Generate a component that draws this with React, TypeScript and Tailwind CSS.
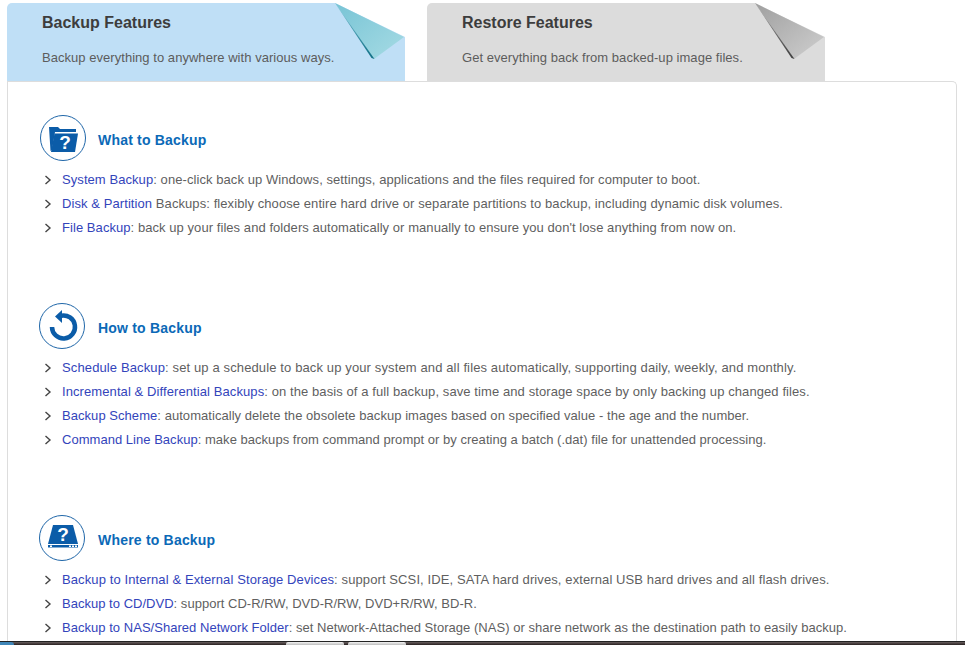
const sections = [
  {
    title: 'What to Backup',
    icon: 'folder',
    height: 'h-[188px]',
    row: 'gap-[12px]',
    items: [
      ['System Backup', ': one-click back up Windows, settings, applications and the files required for computer to boot.', 'tracking-[0.07px]'],
      ['Disk & Partition', ' Backups: flexibly choose entire hard drive or separate partitions to backup, including dynamic disk volumes.', 'tracking-[0.08px]'],
      ['File Backup', ": back up your files and folders automatically or manually to ensure you don't lose anything from now on.", 'tracking-[0.06px]'],
    ],
  },
  {
    title: 'How to Backup',
    icon: 'undo',
    height: 'h-[212px]',
    row: '-ml-px gap-[13px]',
    items: [
      ['Schedule Backup', ': set up a schedule to back up your system and all files automatically, supporting daily, weekly, and monthly.', 'tracking-[0.125px]'],
      ['Incremental & Differential Backups', ': on the basis of a full backup, save time and storage space by only backing up changed files.', 'tracking-[0.09px]'],
      ['Backup Scheme', ': automatically delete the obsolete backup images based on specified value - the age and the number.', 'tracking-[0.05px]'],
      ['Command Line Backup', ': make backups from command prompt or by creating a batch (.dat) file for unattended processing.', 'tracking-[0.03px]'],
    ],
  },
  {
    title: 'Where to Backup',
    icon: 'disk',
    height: 'h-auto',
    row: '-ml-px gap-[13px]',
    items: [
      ['Backup to Internal & External Storage Devices', ': support SCSI, IDE, SATA hard drives, external USB hard drives and all flash drives.', 'tracking-[0.105px]'],
      ['Backup to CD/DVD', ': support CD-R/RW, DVD-R/RW, DVD+R/RW, BD-R.', 'tracking-[0.02px]'],
      ['Backup to NAS/Shared Network Folder', ': set Network-Attached Storage (NAS) or share network as the destination path to easily backup.', 'tracking-[0.035px]'],
    ],
  },
];

function SectionIcon({ name }: { name: string }) {
  return (
    <svg width="46" height="46" viewBox="0 0 46 46" className="shrink-0">
      <circle cx="23" cy="23" r="22.5" fill="#fff" stroke="#1f66a8" strokeWidth="1" />
      {name === 'folder' && (
        <>
          <path d="M9 12h9l2 2h16v3H15l-3 18-1.5 1z" fill="#0b5ca8" />
          <path d="M14.5 18.5H38l-3 18.5H11z" fill="#0b5ca8" />
          <text x="25" y="34" textAnchor="middle" fontSize="19" fontWeight="700" fill="#fff" fontFamily="Liberation Sans">?</text>
        </>
      )}
      {name === 'undo' && (
        <>
          <path d="M22 12.7A11.5 11.5 0 1 1 13 24" fill="none" stroke="#0b5ca8" strokeWidth="4.5" />
          <path d="M23 7v13l-7-6.5z" fill="#0b5ca8" />
        </>
      )}
      {name === 'disk' && (
        <>
          <path d="M14 10h20l5 19H9z" fill="#0b5ca8" />
          <path d="M9 30h30v2.5H9z" fill="#0b5ca8" />
          <rect x="11" y="30.5" width="2" height="1.5" fill="#fff" />
          <rect x="30" y="30.5" width="2" height="1.5" fill="#fff" />
          <rect x="33" y="30.5" width="2" height="1.5" fill="#fff" />
          <rect x="36" y="30.5" width="2" height="1.5" fill="#fff" />
          <text x="24" y="26" textAnchor="middle" fontSize="19" fontWeight="700" fill="#fff" fontFamily="Liberation Sans">?</text>
        </>
      )}
    </svg>
  );
}

function Fold({ id, light, mid, dark }: { id: string; light: string; mid: string; dark: string }) {
  return (
    <svg width="70" height="57" viewBox="0 0 70 57" className="absolute right-0 top-0">
      <defs>
        <linearGradient id={id} x1="0" y1="0" x2="1" y2="1">
          <stop offset="0" stopColor={mid} />
          <stop offset="1" stopColor={light} />
        </linearGradient>
        <linearGradient id={`${id}Edge`} x1="0" y1="0" x2="0" y2="1">
          <stop offset="0" stopColor={mid} />
          <stop offset="1" stopColor={dark} />
        </linearGradient>
      </defs>
      <path d="M0 0h70v34z" fill="#fff" />
      <path d="M0 0L69 34L39 56z" fill={`url(#${id})`} />
      <path d="M0 0L39.5 56L36.5 55z" fill={`url(#${id}Edge)`} />
    </svg>
  );
}

export default function App() {
  return (
    <div className="flex h-[645px] w-[965px] flex-col overflow-hidden bg-white font-['Liberation_Sans',sans-serif]">
      <div className="flex h-[641px] flex-col overflow-hidden pt-[3px] pr-[8px] pl-[7px]">
        <div className="flex h-[78px] shrink-0 gap-[22px]">
          <div className="relative h-[78px] w-[398px] rounded-tl-[5px] bg-[#bfdff6] pt-[11px] pl-[35px]">
            <h2 className="text-[16px] leading-[18px] font-bold text-[#3d3d3d]">Backup Features</h2>
            <p className="mt-[18px] text-[13px] leading-[16px] tracking-[0.04px] text-[#5c5c5c]">Backup everything to anywhere with various ways.</p>
            <Fold id="foldBlue" light="#a6dbe4" mid="#78c4d5" dark="#0f6f85" />
          </div>
          <div className="relative h-[78px] w-[398px] rounded-tl-[5px] bg-[#dcdcdc] pt-[11px] pl-[35px]">
            <h2 className="text-[16px] leading-[18px] font-bold text-[#3d3d3d]">Restore Features</h2>
            <p className="mt-[18px] text-[13px] leading-[16px] tracking-[0.04px] text-[#5c5c5c]">Get everything back from backed-up image files.</p>
            <Fold id="foldGray" light="#cfcfcf" mid="#9f9f9f" dark="#3f3f3f" />
          </div>
        </div>
        <div className="flex-1 rounded-tr-[5px] border-t border-r border-l border-[#dddddd] pt-[33px] pl-[32px]">
          {sections.map((s) => (
            <section key={s.title} className={s.height}>
              <div className={`flex h-[46px] items-center ${s.row}`}>
                <SectionIcon name={s.icon} />
                <h3 className="pt-[4px] text-[14px] font-bold tracking-[0.2px] text-[#0b69b7]">{s.title}</h3>
              </div>
              <ul className="mt-[7px]">
                {s.items.map((it) => (
                  <li key={it[0]} className={`flex h-[24px] items-center text-[13px] text-[#5f5f5f] ${it[2]}`}>
                    <svg width="8" height="10" viewBox="0 0 8 10" className="mr-[10px] ml-[4px] shrink-0">
                      <path d="M1.5 1l4.5 4-4.5 4" fill="none" stroke="#444" strokeWidth="1.4" />
                    </svg>
                    <span>
                      <a className="text-[#3344bb]">{it[0]}</a>
                      {it[1]}
                    </span>
                  </li>
                ))}
              </ul>
            </section>
          ))}
        </div>
      </div>
      <div className="flex h-[4px] border-t border-[#222222] bg-gradient-to-b from-[#6a6060] to-[#2a2222]">
        <div className="h-[3px] w-[14px] rounded-tr-[3px] bg-[#3f86b8]" />
        <div className="ml-[272px] h-[3px] w-[58px] rounded-t-[2px] bg-gradient-to-b from-[#f4f4f4] to-[#bdbdbd]" />
        <div className="ml-[4px] h-[3px] w-[58px] rounded-t-[2px] bg-gradient-to-b from-[#f4f4f4] to-[#bdbdbd]" />
      </div>
    </div>
  );
}
